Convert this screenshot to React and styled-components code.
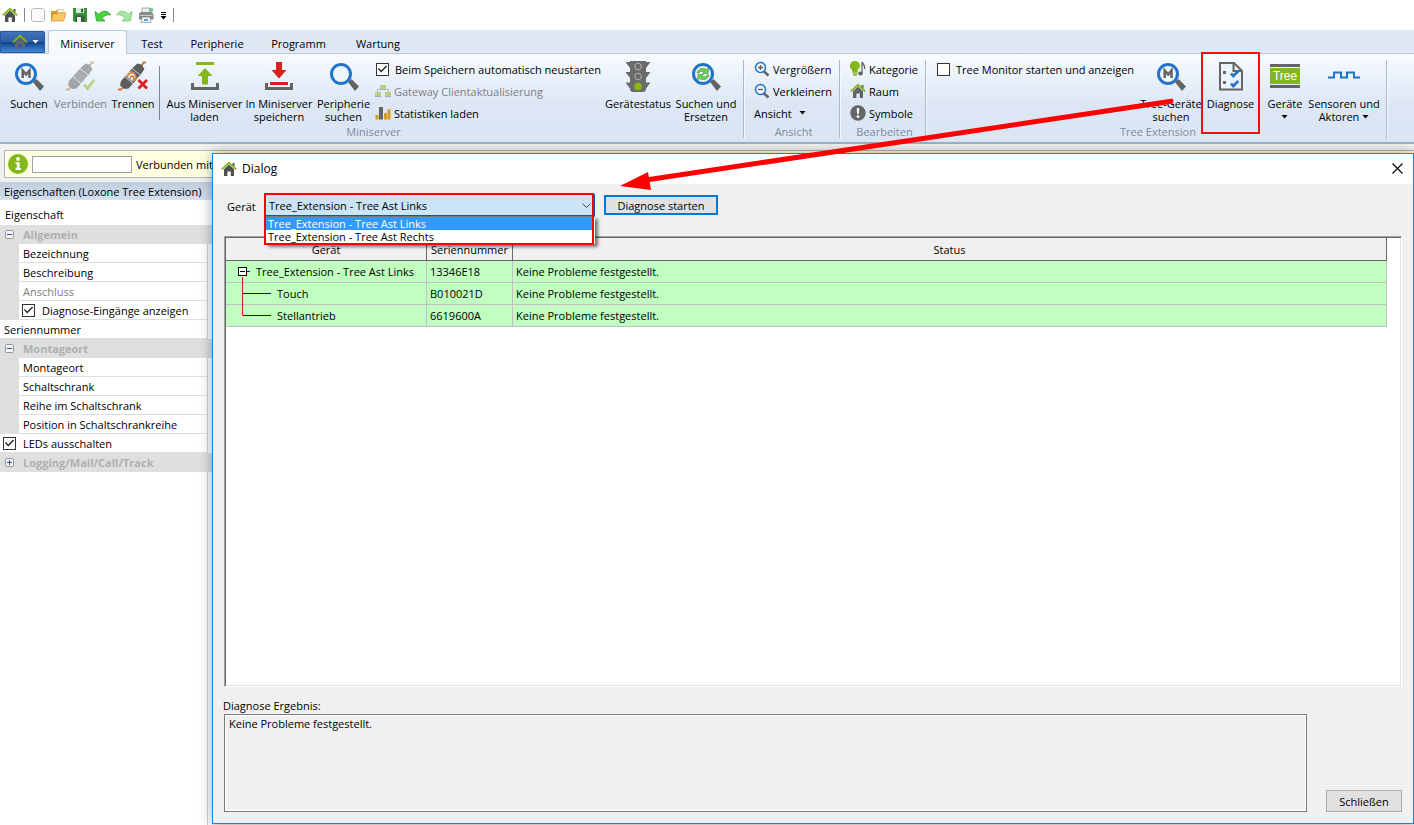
import React from "react";
import styled, { createGlobalStyle, css } from "styled-components";

const GREEN = "#83b81a";
const GREY = "#646464";
const BLUE = "#2374c9";

const GlobalStyle = createGlobalStyle`
  *, *::before, *::after { box-sizing: border-box; }
  body { margin: 0; background: #f0f0f0; color: #000; }
  body, button, input, select, textarea {
    font-family: "Open Sans", "Noto Sans", sans-serif;
    font-size: 11px;
    line-height: 13px;
  }
  svg { display: block; flex: none; }
`;

/* ---------- shell ---------- */

const Page = styled.div`
  min-height: 100vh;
  display: flex;
  flex-direction: column;
  position: relative;
  overflow: hidden;
`;

const QuickBar = styled.header`
  height: 30px;
  display: flex;
  align-items: center;
  gap: 6px;
  padding-left: 2px;
  background: #fff;
`;

const IconButton = styled.button`
  display: flex;
  align-items: center;
  justify-content: center;
  width: ${(p) => p.$width || 16}px;
  height: 16px;
  padding: 0;
  border: 0;
  background: none;
`;

const BarLine = styled.span`
  width: 1px;
  height: 14px;
  background: #8a8a8a;
`;

const TabStrip = styled.nav`
  height: 24px;
  display: flex;
  align-items: stretch;
  background: #dfe9f5;
  box-shadow: inset 0 -1px #bac9db;
`;

const AppMenu = styled.button`
  width: 45px;
  margin: 1px 3px 1px 0;
  padding: 0 0 0 5px;
  display: flex;
  align-items: center;
  justify-content: center;
  gap: 4px;
  border: 1px solid #2d569f;
  border-radius: 0 2px 0 0;
  background: linear-gradient(#4173bd, #2b5da9 48%, #15428b 52%, #3c8bd6);
`;

const Tab = styled.button`
  width: ${(p) => p.$width}px;
  padding: 2px 0 0;
  border: 1px solid transparent;
  border-bottom: 0;
  background: none;
  white-space: nowrap;
  ${(p) =>
    p.$active &&
    css`
      border-color: #bac9db;
      border-radius: 3px 3px 0 0;
      background: #f8fbfe;
    `}
`;

const Ribbon = styled.section`
  height: 90px;
  display: flex;
  background: linear-gradient(#f8fbfe, #e8f0f9 30%, #dce6f4 60%, #dbe6f4);
  border-bottom: 2px solid #9db0c9;
`;

const Group = styled.div`
  display: flex;
  flex-direction: column;
  width: ${(p) => p.$width}px;
  margin: 6px 0 4px;
  flex: none;
  border-right: 1px solid #a9b9cf;
  box-shadow: 1px 0 #f5f9fd;
`;

const GroupBody = styled.div`
  flex: 1;
  display: flex;
  padding-left: ${(p) => p.$pad || 0}px;
`;

const GroupLabel = styled.div`
  height: 13px;
  padding-left: 4px;
  text-align: center;
  color: #7d8ba3;
`;

const BigButton = styled.button`
  position: relative;
  width: ${(p) => p.$width}px;
  flex: none;
  display: flex;
  flex-direction: column;
  align-items: center;
  gap: 4px;
  padding: 1px 0 0;
  border: 0;
  background: none;
  white-space: nowrap;
  color: ${(p) => (p.disabled ? "#7f7f7f" : "#000")};
  ${(p) =>
    p.$marked &&
    css`
      &::after {
        content: "";
        position: absolute;
        inset: -8px 0 -9px;
        border: 2px solid #f20d12;
      }
    `}
`;

const BigLabel = styled.span`
  display: flex;
  flex-direction: column;
  align-items: center;
`;

const InlineCaret = styled.span`
  display: flex;
  align-items: center;
  gap: 3px;
  min-height: 13px;
`;

const Divider = styled.span`
  width: 1px;
  height: 54px;
  margin: 6px 6px 0 0;
  background: #7e8590;
`;

const Stack = styled.div`
  width: ${(p) => p.$width}px;
  margin-top: -2px;
  padding-left: ${(p) => p.$pad || 0}px;
  flex: none;
  display: flex;
  flex-direction: column;
  align-items: flex-start;
`;

const smallRow = css`
  height: 22px;
  display: flex;
  align-items: center;
  gap: ${(p) => p.$gap || 3}px;
  white-space: nowrap;
`;

const SmallButton = styled.button`
  ${smallRow}
  padding: 0;
  border: 0;
  background: none;
  color: ${(p) => (p.disabled ? "#7f7f7f" : "#000")};
`;

const CheckRow = styled.label`
  ${smallRow}
  padding-left: 1px;
`;

const Check = styled.input.attrs({ type: "checkbox" })`
  appearance: none;
  flex: none;
  width: 13px;
  height: 13px;
  margin: 0;
  border: 1px solid #333;
  background: #fff;
  &:checked::before {
    content: "";
    display: block;
    width: 11px;
    height: 11px;
    background: #222;
    clip-path: polygon(9% 50%, 18% 42%, 38% 63%, 83% 18%, 92% 27%, 38% 81%);
  }
`;

/* ---------- left side ---------- */

const Workspace = styled.main`
  flex: 1;
  display: flex;
  flex-direction: column;
  padding-top: 6px;
  background: #f0f0f0;
`;

const MessageBar = styled.div`
  height: 28px;
  margin-left: 4px;
  display: flex;
  align-items: center;
  gap: 4px;
  padding-left: 3px;
  border: 1px solid #b4b4b4;
  border-right: 0;
  background: #ffffe1;
  white-space: nowrap;
`;

const MessageInput = styled.input`
  width: 100px;
  height: 17px;
  border: 1px solid #a0a0a0;
  background: #fff;
`;

const SidePanel = styled.aside`
  width: 212px;
  flex: 1;
  margin-top: 4px;
  display: flex;
  flex-direction: column;
  background: #fff;
`;

const PanelTitle = styled.h2`
  height: 18px;
  margin: 0;
  padding: 3px 4px 0;
  font-size: 11px;
  font-weight: 400;
  white-space: nowrap;
  background: linear-gradient(#bfcddd, #d3e0ee);
`;

const PanelHead = styled.div`
  height: 25px;
  padding: 8px 5px 0;
`;

const PropList = styled.div`
  flex: 1;
  width: 208px;
  border-right: 1px solid #d4d4d4;
`;

const PropRow = styled.div`
  height: 19px;
  display: flex;
  align-items: center;
  white-space: nowrap;
  padding-left: ${(p) => (p.$flush ? 4 : 0)}px;
  color: ${(p) => (p.$muted ? "#808080" : "#000")};
  background: #fff;
  border-bottom: 1px solid #dedede;
  ${(p) =>
    p.$checkbox &&
    css`
      padding-left: 3px;
    `}
  ${(p) =>
    p.$nested &&
    css`
      border-left: 19px solid #dedede;
      padding-left: ${p.$checkbox ? 3 : 4}px;
    `}
`;

const PropCategory = styled.button`
  width: 212px;
  height: 19px;
  display: flex;
  align-items: center;
  gap: 9px;
  padding: 0 0 0 5px;
  border: 0;
  background: #dfdfdf;
  color: #afafaf;
  font-weight: 700;
  text-align: left;
`;

const PropCheck = styled.label`
  display: flex;
  align-items: center;
  gap: 7px;
`;

/* ---------- dialog ---------- */

const DialogWindow = styled.section`
  position: absolute;
  top: 153px;
  left: 212px;
  right: 0;
  bottom: 1px;
  display: flex;
  flex-direction: column;
  border: 1px solid #1883d7;
  background: #f0f0f0;
  box-shadow: 0 0 12px rgba(0, 0, 0, 0.35);
`;

const DialogTitle = styled.header`
  height: 30px;
  flex: none;
  display: flex;
  align-items: center;
  gap: 5px;
  padding: 0 10px 1px 8px;
  background: #fff;
`;

const TitleText = styled.h1`
  flex: 1;
  margin: 0;
  font-size: 12px;
  font-weight: 400;
`;

const DialogBody = styled.div`
  flex: 1;
  display: flex;
  flex-direction: column;
  padding: 0 11px 11px;
`;

const DeviceBar = styled.div`
  height: 52px;
  flex: none;
  display: flex;
  align-items: flex-start;
  padding: 9px 0 0 3px;
`;

const DeviceLabel = styled.label`
  width: 37px;
  padding-top: 7px;
`;

const Combo = styled.div`
  position: relative;
  width: 331px;
  padding: 1px 0 0 1px;
`;

const ComboSelect = styled.select`
  appearance: none;
  display: block;
  width: 330px;
  height: 22px;
  padding: 0 3px;
  border: 1px solid #0a5c9f;
  border-radius: 0;
  background: #cce4f7;
  color: #000;
`;

const ComboArrow = styled.span`
  position: absolute;
  top: 9px;
  right: 3px;
`;

const ComboList = styled.ul`
  position: absolute;
  top: 23px;
  left: 1px;
  width: 330px;
  height: 28px;
  z-index: 2;
  margin: 0;
  padding: 0 1px;
  list-style: none;
  background: #fff;
  border-top: 1px solid #777;
  box-shadow: 3px 3px 3px rgba(0, 0, 0, 0.5);
`;

const ComboOption = styled.li`
  height: 13px;
  padding: 0 2px;
  background: ${(p) => (p.$selected ? "#3399ff" : "#fff")};
  color: ${(p) => (p.$selected ? "#fff" : "#000")};
`;

const ComboMark = styled.span`
  position: absolute;
  z-index: 3;
  top: 0;
  left: 0;
  width: 330px;
  height: 52px;
  border: 2px solid #fa0000;
  pointer-events: none;
`;

const StartButton = styled.button`
  width: 114px;
  height: 20px;
  margin: 2px 0 0 9px;
  padding: 0;
  border: 2px solid #0078d7;
  background: #e1e1e1;
`;

const GridFrame = styled.div`
  flex: 1;
  border: 1px solid;
  border-color: #a0a0a0 #fff #fff #a0a0a0;
  background: #fff;
  box-shadow: inset 1px 1px #696969, inset -1px -1px #e3e3e3;
  padding: 1px 14px 0 1px;
`;

const ResultTable = styled.table`
  width: 100%;
  table-layout: fixed;
  border-collapse: separate;
  border-spacing: 0;
`;

const HeadCell = styled.th`
  height: 23px;
  padding: 0;
  width: ${(p) => (p.$width ? p.$width + "px" : "auto")};
  background: #f0f0f0;
  border-right: 1px solid #696969;
  border-bottom: 1px solid #696969;
  font-weight: 400;
  white-space: nowrap;
`;

const Cell = styled.td`
  height: 22px;
  padding: 0 3px;
  background: #c0ffc0;
  border-right: 1px solid #c0c0c0;
  border-bottom: 1px solid #c0c0c0;
  white-space: nowrap;
`;

const TreeCell = styled(Cell)`
  padding: 0;
`;

const TreeItem = styled.div`
  height: 21px;
  display: flex;
  align-items: center;
  gap: 5px;
  padding-left: 12px;
`;

const ResultLabel = styled.label`
  padding: 12px 0 2px;
  margin-left: -1px;
`;

const BottomRow = styled.div`
  display: flex;
  align-items: flex-end;
  gap: 19px;
`;

const ResultText = styled.textarea`
  flex: 1;
  height: 98px;
  margin: 0;
  padding: 2px 4px;
  resize: none;
  border: 1px solid #7a7a7a;
  box-shadow: inset 0 0 0 1px #fff;
  background: #f0f0f0;
  color: #000;
`;

const CloseButton = styled.button`
  width: 76px;
  height: 22px;
  padding: 0;
  border: 1px solid #adadad;
  background: #e1e1e1;
`;

const Pointer = styled.svg`
  position: absolute;
  z-index: 4;
  top: 90px;
  left: 610px;
  pointer-events: none;
`;

/* ---------- icons ---------- */

const Home = ({ size = 16, body = "#505050" }) => (
  <svg width={size} height={size} viewBox="0 0 16 16">
    <path d="M11.5 2h2v4l-2-2z" fill={body} />
    <path d="M3 8.2 8 3.6l5 4.6V15H9.8v-4.5H6.4V15H3z" fill={body} />
    <path d="M.8 8.4 8 1.8l7.2 6.6" fill="none" stroke={GREEN} strokeWidth="1.9" />
  </svg>
);

const Caret = ({ color = "#000" }) => (
  <svg width="7" height="4" viewBox="0 0 7 4">
    <path d="M.5 0h6L3.5 3.5z" fill={color} />
  </svg>
);

const NewDoc = () => (
  <svg width="16" height="16" viewBox="0 0 16 16">
    <path d="M3.5 1.5h9l2 1.5v10l-1.500 1.500H3L1.500 13V3z" fill="#fdfdfd" stroke="#b7bbb7" />
  </svg>
);

const Folder = () => (
  <svg width="16" height="16" viewBox="0 0 16 16">
    <path d="M1 4h5l1-1.500h5V5h1v8H1z" fill="#d9942c" />
    <path d="M8 2.500h6l-1 5H7z" fill="#f7f3e8" stroke="#c9b691" strokeWidth=".5" />
    <path d="M3 7h4l1-1.200h8L13.600 14H1z" fill="#f9c662" stroke="#d58f2b" strokeWidth=".7" />
  </svg>
);

const Save = () => (
  <svg width="16" height="16" viewBox="0 0 16 16">
    <path d="M1 1h14v14H2.500L1 13.500z" fill="#37913b" />
    <path d="M4 1h8v5H4z" fill="#d9ead9" />
    <path d="M9 1.800h2v3.400H9z" fill="#2a5f2e" />
    <path d="M3.500 8.500h9V15h-9z" fill="#375f3a" />
    <path d="M5 10h4v5H5z" fill="#eef5ee" />
  </svg>
);

const Undo = ({ flip, light }) => (
  <svg width="17" height="16" viewBox="0 0 17 16">
    <path
      transform={flip ? "translate(17 0) scale(-1 1)" : undefined}
      d="M1 4.500 2.500 14h8.500L8.300 11.200C10 8.500 13 7.200 16.500 8 15 3.700 8.500 2.500 4.600 7.200z"
      fill={light ? "#a5e6a1" : "#49d43f"}
      stroke={light ? "#7cc87c" : "#2f9e33"}
      strokeWidth=".8"
    />
  </svg>
);

const Printer = () => (
  <svg width="16" height="16" viewBox="0 0 16 16">
    <path d="M4 1h8v6H4z" fill="#e9eef0" stroke="#888" strokeWidth=".7" />
    <path d="M1 6.500 3 5h10.500L15.500 7v5.500H1z" fill="#858b8d" />
    <path d="M2 8.500h12.500" stroke="#c9cfd1" />
    <path d="M4 10h8l1 5.500H3z" fill="#eef6fb" stroke="#777" strokeWidth=".6" />
    <path d="M6 12h4v2H6z" fill="#4d9fe0" />
    <circle cx="13" cy="3" r="2.300" fill="#79c58c" />
  </svg>
);

const MoreMark = () => (
  <svg width="7" height="9" viewBox="0 0 7 9">
    <path d="M1 1.500h5M1 3.500h5" stroke="#000" />
    <path d="M.5 5h6l-3 3.500z" />
  </svg>
);

const Magnifier = ({ children }) => (
  <svg width="32" height="32" viewBox="0 0 32 32">
    <path d="m20 21 3.500-3 7.500 7.500-4 4.500z" fill={GREY} />
    <circle cx="13" cy="13" r="9.500" fill="#eef4fb" stroke={BLUE} strokeWidth="3" />
    {children}
  </svg>
);

const LetterM = () => (
  <path d="M9.700 17V9.500l3.400 4 3.400-4V17" fill="none" stroke={GREY} strokeWidth="2.500" />
);

const Cycle = () => (
  <>
    <path d="M7 12c.500-4 6-6 9.500-3.500l2-1.500-.500 5.500h-5.500l1.800-1.700c-2-1.200-4.500-.800-5.300 1.200z" fill="#6fd455" stroke="#2f8a31" strokeWidth=".6" />
    <path d="M19 14c-.500 4-6 6-9.500 3.500l-2 1.500.500-5.500h5.500l-1.800 1.700c2 1.200 4.500.800 5.300-1.200z" fill="#6fd455" stroke="#2f8a31" strokeWidth=".6" />
  </>
);

const Plug = ({ linked }) => (
  <svg width="32" height="32" viewBox="0 0 32 32">
    <g opacity={linked ? 1 : 0.5}>
      <path d="M1 28.500h3L7 25M24 6l2.500-4.500H29" fill="none" stroke="#c87a3a" strokeWidth="1.800" />
      <path d="m4 20 4-4.500 8 7-4.500 5-4 .500-4.500-3.500z" fill="#5c5c5c" />
      <path d="m15.500 7 5-4.500 4 1 3 4.500-4.500 6.500-8-6z" fill="#5c5c5c" />
      <path d="m8 15.500 7-8 8 6.500-7 8.500z" fill={linked ? "#5f5f5f" : "#6a6a6a"} />
      <path d="m7.500 15.500 8.500 7M15 7.500l8.500 6.500" stroke="#d5d9df" strokeWidth=".9" />
      {linked && (
        <>
          <path d="M9 15c1-5 7-6 9-2.500s0 6-2.500 8z" fill="#e5ebf3" />
          <path d="M10.500 16c0-3.500 4.500-5.500 7-3s1.500 5.500-.500 7.500M13 17.500c.500-2.500 3-3 3.700-1.500s.300 2.500-.700 3.500" fill="none" stroke="#d9792c" strokeWidth="1.500" />
        </>
      )}
    </g>
    {linked ? (
      <path d="m21.500 19 8.500 8.500m0-8.500-8.500 8.500" stroke="#d6231f" strokeWidth="2.800" />
    ) : (
      <path d="m19 23.500 3.500 4L29 19" fill="none" stroke="#b4d283" strokeWidth="2.800" />
    )}
  </svg>
);

const Transfer = ({ down }) => (
  <svg width="32" height="32" viewBox="0 0 32 32">
    <path d="M3.500 22v5.500h25V22" fill="none" stroke={GREY} strokeWidth="3" />
    {down ? (
      <path d="M13 1h6v8h4.500L16 17.500 8.500 9H13zM7 21h18v3H7z" fill="#dc1e1e" />
    ) : (
      <path d="M7 1h18v3H7zM16 7l7.500 8H19v8.500h-6V15H8.500z" fill={GREEN} />
    )}
  </svg>
);

const TrafficLight = () => (
  <svg width="32" height="32" viewBox="0 0 32 32">
    <path d="M8 0h16v1h4.500L24 7v4h4.500L24 17v4.500h4.500L24 27.500V29l-2 2H10l-2-2v-1.500l-4.500-6H8V17l-4.500-6H8V7L3.500 1H8z" fill="#6b6b6b" />
    <circle cx="16" cy="5.500" r="3.300" fill="none" stroke="#b4b4b4" />
    <circle cx="16" cy="15.500" r="3.300" fill="none" stroke="#b4b4b4" />
    <circle cx="16" cy="25.500" r="3.700" fill="#86bb08" />
  </svg>
);

const Report = () => (
  <svg width="32" height="32" viewBox="0 0 32 32">
    <path d="M5 2h14l8 8v18.500H5z" fill="#edf3fa" stroke={GREY} strokeWidth="2" />
    <path d="M18.500 2v8H27" fill="none" stroke={GREY} strokeWidth="2" />
    <path d="M8 10h3v3H8zM8 20h3v3H8z" fill={GREY} />
    <path d="m16 12.500 2.300 2.500 5-5M16 22.500l2.300 2.500 5-5" fill="none" stroke={BLUE} strokeWidth="2.600" />
  </svg>
);

const TreeLogo = styled.span`
  width: 30px;
  height: 32px;
  padding: 3px 0 5px;
  display: flex;
  flex-direction: column;
  gap: 1px;
  color: #fff;
  font-family: "Liberation Sans", Arial, sans-serif;
  font-size: 12px;
  line-height: 16px;
  &::before, &::after { content: ""; height: 3px; background: #646464; }
`;

const TreeWord = styled.span`
  background: #83b81a;
`;

const Wave = () => (
  <svg width="32" height="32" viewBox="0 0 32 32">
    <path d="M0 16.500h6v-5h7v5h6v-5h7v5h6" fill="none" stroke={BLUE} strokeWidth="2" />
  </svg>
);

const Network = () => (
  <svg width="16" height="14" viewBox="0 0 16 14">
    <path d="M2.500 9V5.500h11V9M8 4v2" fill="none" stroke="#b3b8ba" />
    <path d="M5 1h6v4H5zM0 8h6v4H0zM10 8h6v4h-6z" fill="#b3d084" />
    <path d="M5 5.500h6M0 12.500h6M10 12.500h6" stroke="#a7abad" />
  </svg>
);

const Bars = () => (
  <svg width="16" height="16" viewBox="0 0 16 16">
    <path d="M.5 10h3v4.500h-3zM9 8h3v6.500H9zM12.500 4.500h3v10h-3z" fill="#dc9a20" />
    <path d="M4 2h4v12.500H4z" fill={GREY} />
  </svg>
);

const Zoom = ({ plus }) => (
  <svg width="16" height="16" viewBox="0 0 16 16">
    <path d="m10 10.500 4.500 4" stroke={GREY} strokeWidth="2.600" />
    <circle cx="6.500" cy="6.500" r="5" fill="#f2f7fc" stroke={BLUE} strokeWidth="1.500" />
    <path d={plus ? "M4 6.500h5M6.500 4v5" : "M4 6.500h5"} stroke={GREY} strokeWidth="1.400" />
  </svg>
);

const Category = () => (
  <svg width="16" height="16" viewBox="0 0 16 16">
    <path d="M5 0a4.800 4.800 0 0 1 2.800 8.800L7.500 11h-5L2 8.800A4.800 4.800 0 0 1 5 0z" fill={GREEN} />
    <path d="M2.500 12h5M3 14h4" stroke={GREEN} strokeWidth="1.400" />
    <path d="M12 1.500V12" stroke={GREY} strokeWidth="1.300" />
    <path d="M12 1c1 2.500 3.500 3 2.500 7" fill="none" stroke={GREY} strokeWidth="1.500" />
    <ellipse cx="10.500" cy="12.500" rx="2.300" ry="1.900" fill={GREY} />
  </svg>
);

const Alert = () => (
  <svg width="16" height="16" viewBox="0 0 16 16">
    <circle cx="8" cy="8" r="7.700" fill="#666" />
    <path d="M6.700 3h2.600l-.500 6H7.200z" fill="#fff" />
    <circle cx="8" cy="11.600" r="1.400" fill="#fff" />
  </svg>
);

const Info = () => (
  <svg width="20" height="20" viewBox="0 0 20 20">
    <circle cx="10" cy="10" r="10" fill={GREEN} />
    <circle cx="10" cy="5" r="1.900" fill="#fff" />
    <path d="M7.500 8.300h4.200v6H13v1.800H7.500v-1.800h1.300v-4.200H7.500z" fill="#fff" />
  </svg>
);

const Expander = ({ open }) => (
  <svg width="9" height="9" viewBox="0 0 9 9">
    <rect x=".5" y=".5" width="8" height="8" rx="1" fill="#f3f3f3" stroke="#959595" />
    <path d={open ? "M2 4.500h5" : "M2 4.500h5M4.500 2v5"} stroke="#33549c" />
  </svg>
);

const TreeRoot = () => (
  <svg width="13" height="21" viewBox="0 0 13 21">
    <rect x=".5" y="6.500" width="8" height="8" fill="#fff" stroke="#000" />
    <path d="M2 10.500h5" stroke="#000" />
    <path d="M9 10.500h3" stroke="#00f" />
    <path d="M4.500 16v5" stroke="#d8103a" />
  </svg>
);

const TreeBranch = ({ last }) => (
  <svg width="34" height="22" viewBox="0 0 34 22" overflow="visible">
    <path d={last ? "M4.500 -1v11.500" : "M4.500 -1v23"} stroke="#d8103a" />
    <path d="M5 10.500h28" stroke="#00f" />
  </svg>
);

const Cross = () => (
  <svg width="11" height="11" viewBox="0 0 11 11">
    <path d="m.5.5 10 10m0-10-10 10" stroke="#000" strokeWidth="1.100" />
  </svg>
);

/* ---------- content ---------- */

const TABS = [
  ["Miniserver", 79],
  ["Test", 50],
  ["Peripherie", 80],
  ["Programm", 83],
  ["Wartung", 76],
];

const DEVICES = ["Tree_Extension - Tree Ast Links", "Tree_Extension - Tree Ast Rechts"];

const RESULTS = [
  ["Tree_Extension - Tree Ast Links", "13346E18"],
  ["Touch", "B010021D"],
  ["Stellantrieb", "6619600A"],
];

const OK_TEXT = "Keine Probleme festgestellt.";

function Big({ icon, lines, ...rest }) {
  return (
    <BigButton {...rest}>
      {icon}
      <BigLabel>
        {lines.map((line, i) => (
          <span key={i}>{line}</span>
        ))}
      </BigLabel>
    </BigButton>
  );
}

function RibbonBar() {
  return (
    <Ribbon>
      <Group $width={744}>
        <GroupBody $pad={4}>
          <Big $width={50} icon={<Magnifier><LetterM /></Magnifier>} lines={["Suchen"]} />
          <Big $width={53} icon={<Plug />} lines={["Verbinden"]} disabled />
          <Big $width={52} icon={<Plug linked />} lines={["Trennen"]} />
          <Divider />
          <Big $width={77} icon={<Transfer />} lines={["Aus Miniserver", "laden"]} />
          <Big $width={72} icon={<Transfer down />} lines={["In Miniserver", "speichern"]} />
          <Big $width={57} icon={<Magnifier />} lines={["Peripherie", "suchen"]} />
          <Stack $width={232} $pad={3}>
            <CheckRow $gap={6}>
              <Check defaultChecked />
              Beim Speichern automatisch neustarten
            </CheckRow>
            <SmallButton disabled>
              <Network />
              Gateway Clientaktualisierung
            </SmallButton>
            <SmallButton>
              <Bars />
              Statistiken laden
            </SmallButton>
          </Stack>
          <Big $width={68} icon={<TrafficLight />} lines={["Gerätestatus"]} />
          <Big $width={68} icon={<Magnifier><Cycle /></Magnifier>} lines={["Suchen und", "Ersetzen"]} />
        </GroupBody>
        <GroupLabel>Miniserver</GroupLabel>
      </Group>
      <Group $width={96}>
        <GroupBody $pad={10}>
          <Stack $width={80}>
            <SmallButton>
              <Zoom plus />
              Vergrößern
            </SmallButton>
            <SmallButton>
              <Zoom />
              Verkleinern
            </SmallButton>
            <SmallButton $gap={7}>
              Ansicht
              <Caret />
            </SmallButton>
          </Stack>
        </GroupBody>
        <GroupLabel>Ansicht</GroupLabel>
      </Group>
      <Group $width={86}>
        <GroupBody $pad={10}>
          <Stack $width={70}>
            <SmallButton>
              <Category />
              Kategorie
            </SmallButton>
            <SmallButton>
              <Home body="#646464" />
              Raum
            </SmallButton>
            <SmallButton>
              <Alert />
              Symbole
            </SmallButton>
          </Stack>
        </GroupBody>
        <GroupLabel>Bearbeiten</GroupLabel>
      </Group>
      <Group $width={461}>
        <GroupBody $pad={10}>
          <Stack $width={205}>
            <CheckRow $gap={6}>
              <Check />
              Tree Monitor starten und anzeigen
            </CheckRow>
          </Stack>
          <Big $width={60} icon={<Magnifier><LetterM /></Magnifier>} lines={["Tree-Geräte", "suchen"]} />
          <Big $width={59} icon={<Report />} lines={["Diagnose"]} $marked />
          <Big
            $width={50}
            icon={<TreeLogo><TreeWord>Tree</TreeWord></TreeLogo>}
            lines={["Geräte", <InlineCaret><Caret /></InlineCaret>]}
          />
          <Big
            $width={68}
            icon={<Wave />}
            lines={["Sensoren und", <InlineCaret>Aktoren<Caret /></InlineCaret>]}
          />
        </GroupBody>
        <GroupLabel>Tree Extension</GroupLabel>
      </Group>
    </Ribbon>
  );
}

function Properties() {
  return (
    <SidePanel>
      <PanelTitle>Eigenschaften (Loxone Tree Extension)</PanelTitle>
      <PanelHead>Eigenschaft</PanelHead>
      <PropList>
        <PropCategory><Expander open />Allgemein</PropCategory>
        <PropRow $nested>Bezeichnung</PropRow>
        <PropRow $nested>Beschreibung</PropRow>
        <PropRow $nested $muted>Anschluss</PropRow>
        <PropRow $nested $checkbox>
          <PropCheck><Check defaultChecked />Diagnose-Eingänge anzeigen</PropCheck>
        </PropRow>
        <PropRow $flush>Seriennummer</PropRow>
        <PropCategory><Expander open />Montageort</PropCategory>
        <PropRow $nested>Montageort</PropRow>
        <PropRow $nested>Schaltschrank</PropRow>
        <PropRow $nested>Reihe im Schaltschrank</PropRow>
        <PropRow $nested>Position in Schaltschrankreihe</PropRow>
        <PropRow $checkbox>
          <PropCheck><Check defaultChecked />LEDs ausschalten</PropCheck>
        </PropRow>
        <PropCategory><Expander />Logging/Mail/Call/Track</PropCategory>
      </PropList>
    </SidePanel>
  );
}

function DiagnoseDialog() {
  return (
    <DialogWindow role="dialog" aria-labelledby="dialog-title">
      <DialogTitle>
        <Home />
        <TitleText id="dialog-title">Dialog</TitleText>
        <IconButton $width={11} aria-label="Fenster schließen"><Cross /></IconButton>
      </DialogTitle>
      <DialogBody>
        <DeviceBar>
          <DeviceLabel htmlFor="device">Gerät</DeviceLabel>
          <Combo>
            <ComboSelect id="device" defaultValue={DEVICES[0]}>
              {DEVICES.map((d) => (
                <option key={d}>{d}</option>
              ))}
            </ComboSelect>
            <ComboArrow>
              <svg width="11" height="8" viewBox="0 0 11 8">
                <path d="m1.500 1.500 4 4 4-4" fill="none" stroke="#444" />
              </svg>
            </ComboArrow>
            <ComboList role="listbox">
              {DEVICES.map((d, i) => (
                <ComboOption key={d} role="option" aria-selected={i === 0} $selected={i === 0}>
                  {d}
                </ComboOption>
              ))}
            </ComboList>
            <ComboMark />
          </Combo>
          <StartButton>Diagnose starten</StartButton>
        </DeviceBar>
        <GridFrame>
          <ResultTable>
            <thead>
              <tr>
                <HeadCell $width={201}>Gerät</HeadCell>
                <HeadCell $width={86}>Seriennummer</HeadCell>
                <HeadCell>Status</HeadCell>
              </tr>
            </thead>
            <tbody>
              {RESULTS.map(([name, serial], i) => (
                <tr key={serial}>
                  <TreeCell>
                    <TreeItem>
                      {i === 0 ? <TreeRoot /> : <TreeBranch last={i === RESULTS.length - 1} />}
                      {name}
                    </TreeItem>
                  </TreeCell>
                  <Cell>{serial}</Cell>
                  <Cell>{OK_TEXT}</Cell>
                </tr>
              ))}
            </tbody>
          </ResultTable>
        </GridFrame>
        <ResultLabel htmlFor="result">Diagnose Ergebnis:</ResultLabel>
        <BottomRow>
          <ResultText id="result" readOnly defaultValue={OK_TEXT} />
          <CloseButton>Schließen</CloseButton>
        </BottomRow>
      </DialogBody>
    </DialogWindow>
  );
}

export default function App() {
  return (
    <Page>
      <GlobalStyle />
      <QuickBar>
        <IconButton aria-label="Start"><Home /></IconButton>
        <BarLine />
        <IconButton $width={13} aria-label="Neu"><NewDoc /></IconButton>
        <IconButton aria-label="Öffnen"><Folder /></IconButton>
        <IconButton aria-label="Speichern"><Save /></IconButton>
        <IconButton aria-label="Rückgängig"><Undo /></IconButton>
        <IconButton aria-label="Wiederholen"><Undo flip light /></IconButton>
        <IconButton aria-label="Drucken"><Printer /></IconButton>
        <IconButton $width={7} aria-label="Mehr"><MoreMark /></IconButton>
        <BarLine />
      </QuickBar>
      <TabStrip>
        <AppMenu aria-label="Menü"><Home body="#5c6470" /><Caret color="#fff" /></AppMenu>
        {TABS.map(([name, width], i) => (
          <Tab key={name} $width={width} $active={i === 0}>{name}</Tab>
        ))}
      </TabStrip>
      <RibbonBar />
      <Workspace>
        <MessageBar>
          <Info />
          <MessageInput aria-label="Meldung" />
          Verbunden mit
        </MessageBar>
        <Properties />
      </Workspace>
      <DiagnoseDialog />
      <Pointer width="570" height="110" viewBox="0 0 570 110" aria-hidden="true">
        <path d="M36 90 563 11" stroke="#fe0000" strokeWidth="5" />
        <path d="m10 96 28-14 3 18z" fill="#fe0000" />
      </Pointer>
    </Page>
  );
}
